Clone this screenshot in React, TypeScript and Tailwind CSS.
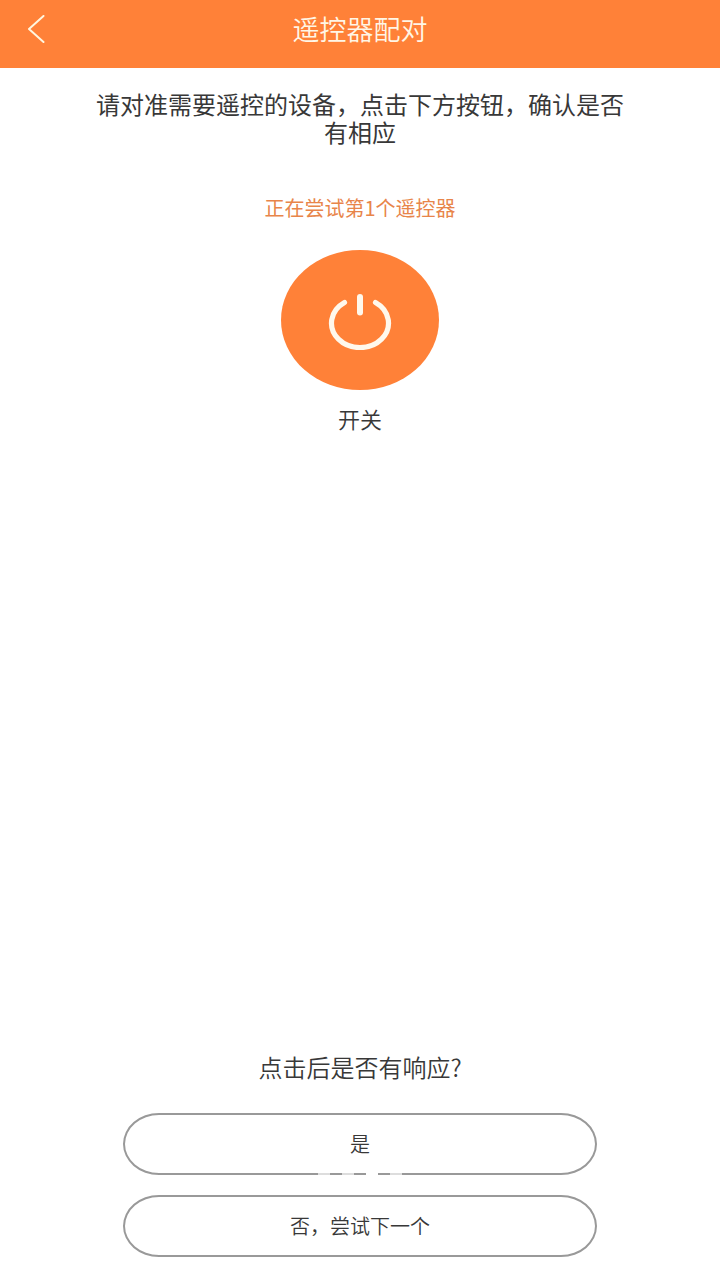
import { useState } from "react";

function BackIcon() {
  return (
    <svg className="h-7 w-5" viewBox="0 0 20 28" fill="none" stroke="#fff6df" strokeWidth="2" aria-hidden="true">
      <path d="M17.5 1 3 14l14.5 13" strokeLinecap="round" strokeLinejoin="round" />
    </svg>
  );
}

function PowerIcon() {
  return (
    <svg className="h-15 w-16" viewBox="0 0 64 60" fill="none" stroke="#fff8ec" strokeLinecap="round" aria-hidden="true">
      <path d="M16.500 12.500A28.500 24.500 0 1 0 47.500 12.500" strokeWidth="5.200" />
      <path d="M32 7v15.500" strokeWidth="6" />
    </svg>
  );
}

export default function App() {
  const [remote, setRemote] = useState(1);

  return (
    <div
      lang="zh-CN"
      className="flex min-h-screen flex-col bg-white font-['Noto_Sans_CJK_SC',sans-serif] text-[#383838]"
    >
      <header className="grid h-17 grid-cols-[1fr_auto_1fr] items-center bg-[#ff8138] px-6 pb-2.5 text-[#fff6e6]">
        <button type="button" aria-label="返回" className="justify-self-start p-0.5">
          <BackIcon />
        </button>
        <h1 className="text-[27px] leading-8 font-[350]">遥控器配对</h1>
      </header>

      <main className="flex flex-1 flex-col items-center px-24 pt-[22px] pb-[23px]">
        <p className="text-center text-2xl leading-7">
          请对准需要遥控的设备，点击下方按钮，确认是否有相应
        </p>
        <p className="mt-12 text-xl leading-7 text-[#e8854a]">正在尝试第{remote}个遥控器</p>

        <button
          type="button"
          aria-labelledby="power-label"
          className="mt-7 flex h-35 w-[158px] items-center justify-center rounded-[50%] bg-[#ff8138]"
        >
          <PowerIcon />
        </button>
        <span id="power-label" className="mt-3.5 text-[22px] leading-7 font-[350]">开关</span>

        <section className="mt-auto flex w-full flex-col items-center gap-5 px-[27px] font-[350]">
          <h2 className="mb-3 text-2xl leading-7 font-[350]">点击后是否有响应?</h2>
          <button
            type="button"
            className="relative h-[62px] w-full rounded-[36px/31px] border-2 border-[#999999] text-xl"
          >
            是
            {/* faint breaks along the lower edge */}
            <span aria-hidden="true" className="absolute -bottom-0.5 left-1/2 flex -translate-x-1/2 gap-3">
              <span className="h-0.5 w-3 bg-[#dddddd]" />
              <span className="h-0.5 w-3 bg-[#dddddd]" />
              <span className="h-0.5 w-3 bg-white" />
              <span className="h-0.5 w-3 bg-[#dddddd]" />
            </span>
          </button>
          <button
            type="button"
            onClick={() => setRemote(remote + 1)}
            className="h-[62px] w-full rounded-[36px/31px] border-2 border-[#999999] text-xl"
          >
            否，尝试下一个
          </button>
        </section>
      </main>
    </div>
  );
}
